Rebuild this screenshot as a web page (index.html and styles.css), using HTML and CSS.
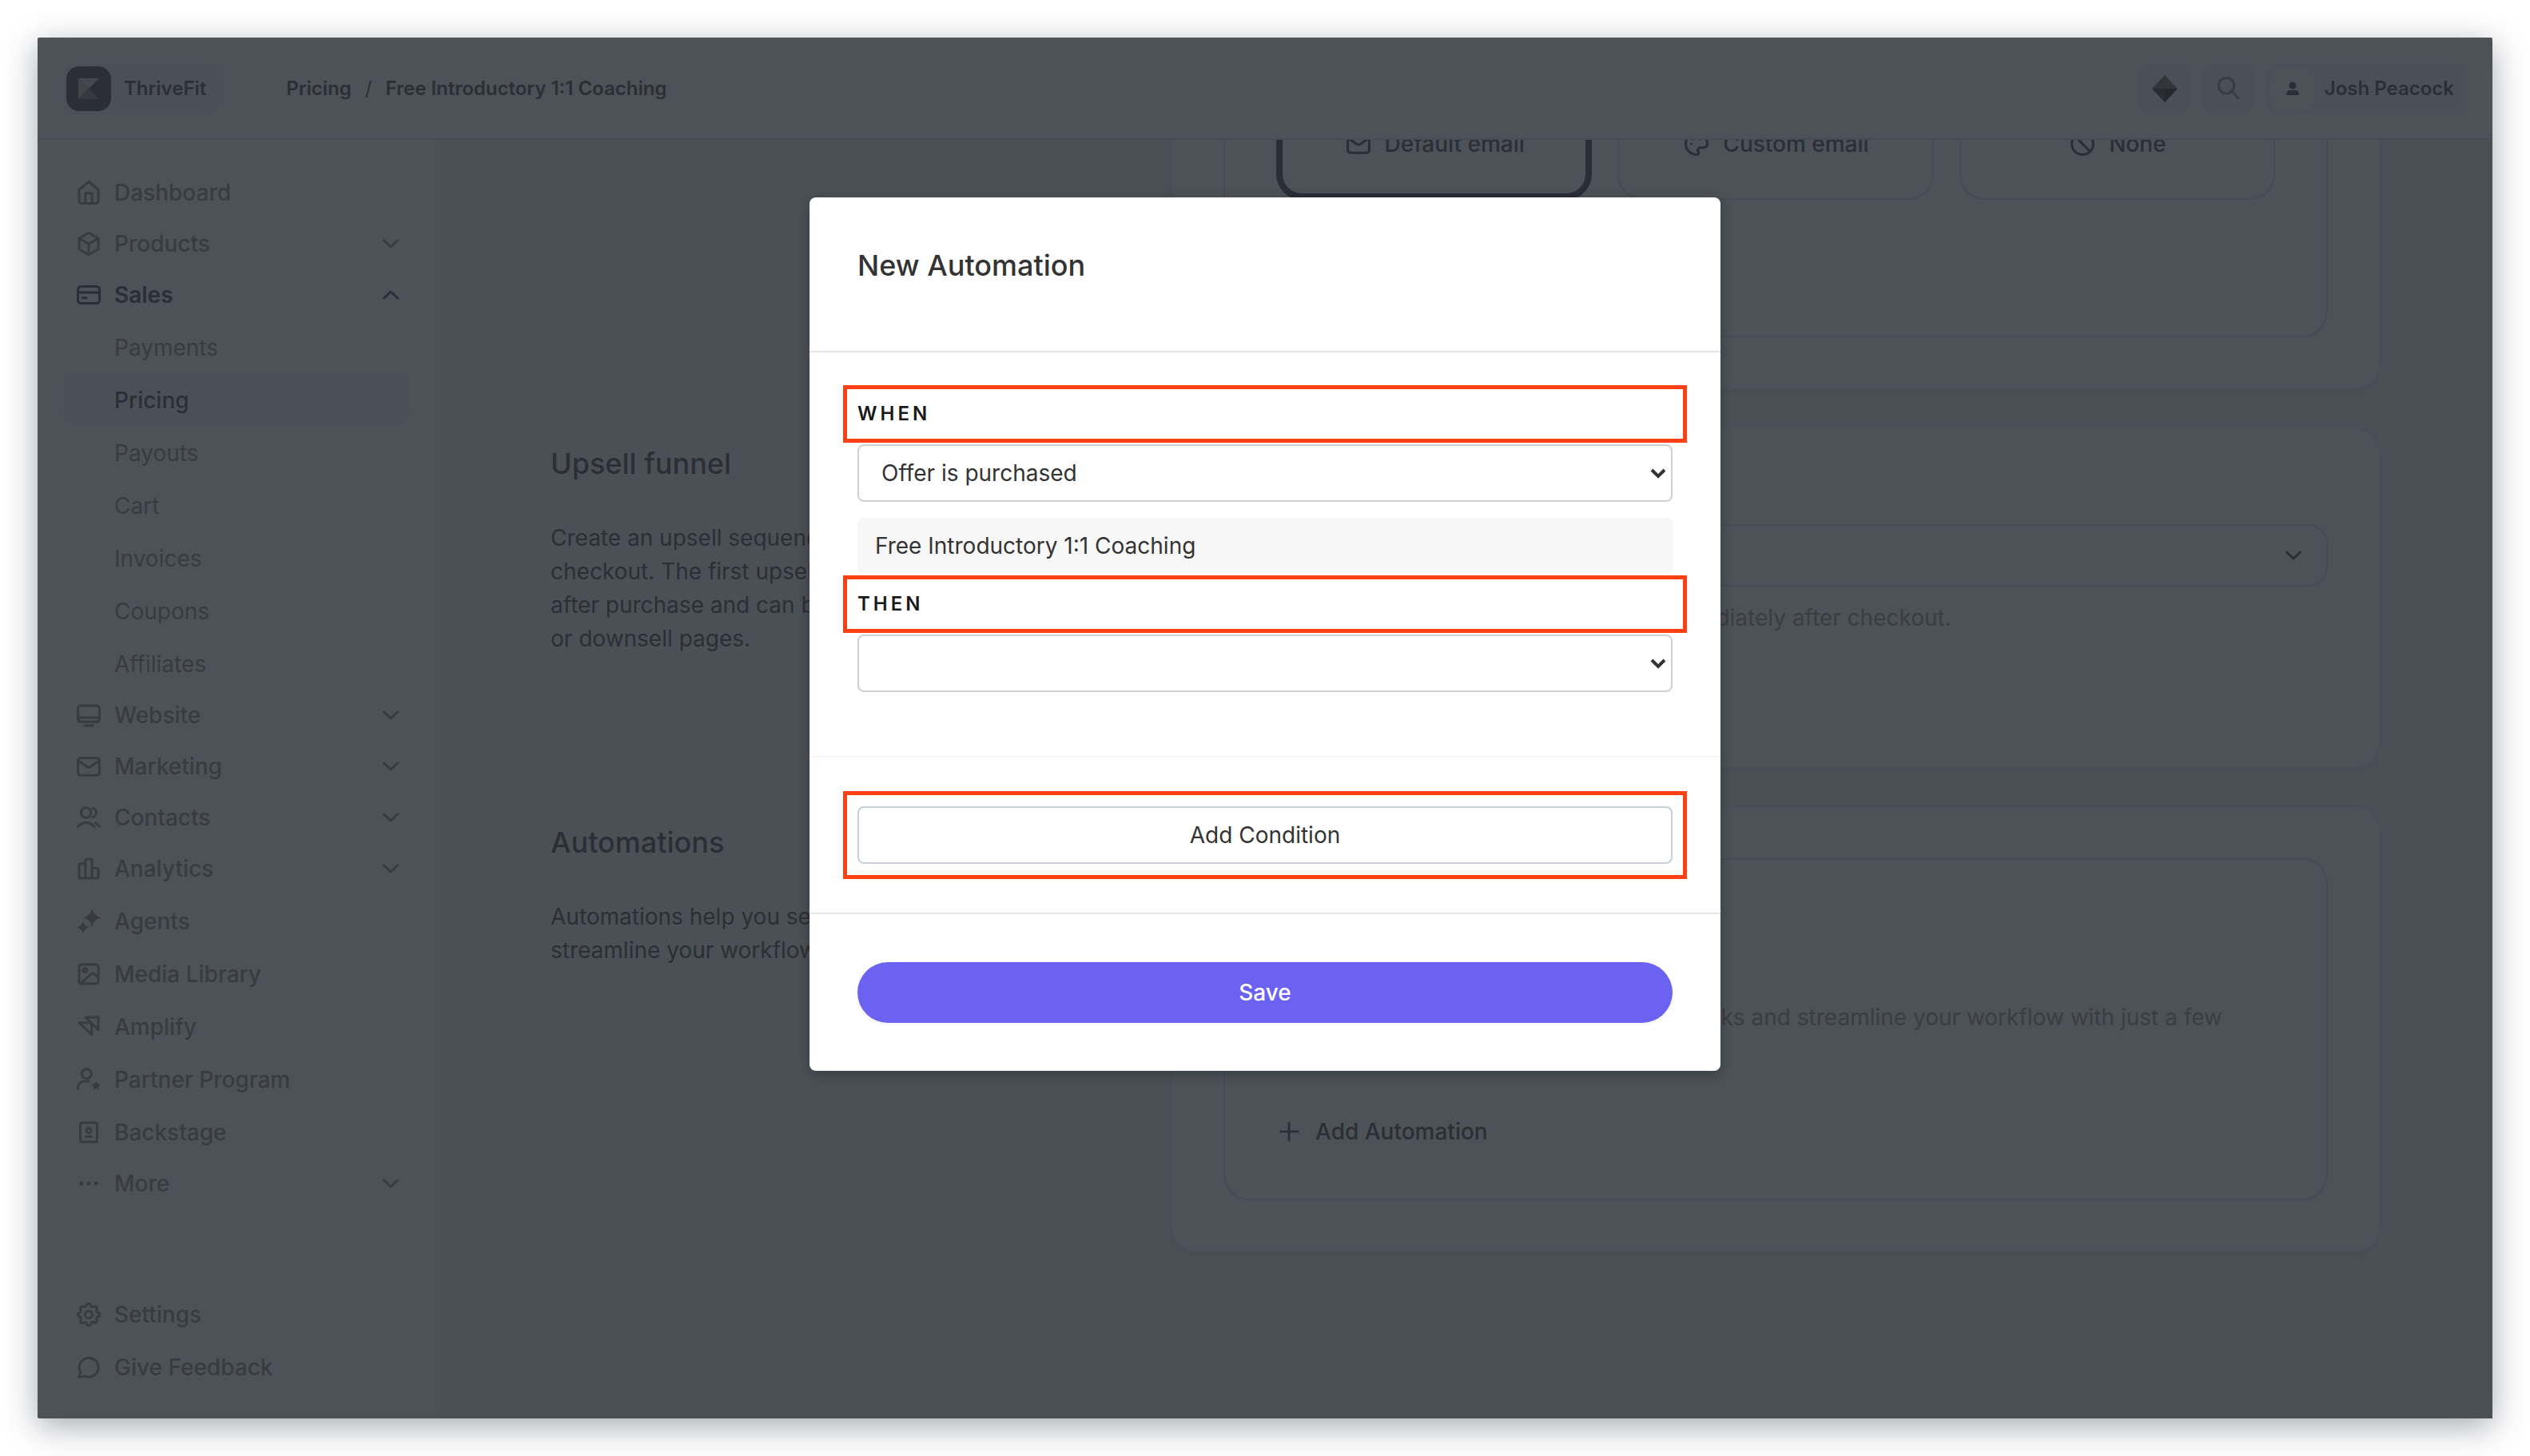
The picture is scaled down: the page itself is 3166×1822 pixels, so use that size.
FILE: index.html
```
<!DOCTYPE html>
<html lang="en">
<head>
  <meta charset="UTF-8" />
  <meta name="viewport" content="width=device-width, initial-scale=1.0" />
  <title>New Automation - ThriveFit</title>
  <link rel="stylesheet" href="styles.css">
</head>
<body>

  <!-- shared icons -->
  <svg class="sprite" aria-hidden="true">
    <symbol id="chevron" viewBox="0 0 24 24"><path d="M3.500 8l8.500 8 8.500-8" /></symbol>
    <symbol id="caret" viewBox="0 0 20 14"><path d="M2 2l8 8 8-8" /></symbol>
    <symbol id="mail" viewBox="0 0 24 24"><rect x="3" y="5" width="18" height="14.500" rx="2.500" /><path d="M3.500 7.500l7.500 5q1 .6 2 0l7.500-5" /></symbol>
  </svg>

  <div class="app">
    <header class="topbar">
      <button class="brand">
        <span class="brand-logo">
          <svg viewBox="0 0 28 28">
            <path d="M1 1h26L14 14z" fill="#45484f" />
            <path d="M1 1v26l13-13z" fill="#41454a" />
            <path d="M1 27h26L14 14z" fill="#363a3f" />
          </svg>
        </span>
        ThriveFit
      </button>

      <nav class="breadcrumb">
        <a href="#">Pricing</a>
        <span class="slash">/</span>
        <a href="#">Free Introductory 1:1 Coaching</a>
      </nav>

      <div class="topbar-actions">
        <button class="icon-btn" aria-label="Assistant">
          <svg class="gem" viewBox="0 0 32 34">
            <path d="M16 0L0 17h16z" fill="#31353b" />
            <path d="M16 0l16 17H16z" fill="#33373b" />
            <path d="M0 17h16v17z" fill="#292c31" />
            <path d="M32 17H16v17z" fill="#25282c" />
          </svg>
        </button>
        <button class="icon-btn" aria-label="Search">
          <svg class="icon" viewBox="0 0 24 24"><circle cx="10" cy="9.500" r="6.500" /><path d="M14.800 14.200l5.200 5.800" /></svg>
        </button>
        <button class="user">
          <span class="avatar">
            <svg viewBox="0 0 16 18"><circle cx="8" cy="5" r="4.500" /><path d="M1 17q-.8 0-.8-1 .2-5 4.300-5h7q4.100 0 4.300 5 0 1-.8 1z" /></svg>
          </span>
          Josh Peacock
        </button>
      </div>
    </header>

    <div class="body">
      <aside class="sidebar">
        <nav class="nav">
          <a href="#" class="nav-item">
            <svg class="icon" viewBox="0 0 24 24"><path d="M12 3l8 6.500V19a2 2 0 0 1-2 2H6a2 2 0 0 1-2-2V9.500z" /><path d="M9.200 21v-7.500a1 1 0 0 1 1-1h3.600a1 1 0 0 1 1 1V21" /></svg>
            Dashboard
          </a>
          <button class="nav-item group">
            <svg class="icon" viewBox="0 0 24 24"><path d="M12 2.800l8 4.700v9L12 21.200l-8-4.700v-9z" /><path d="M4 7.500l8 4.700 8-4.700M12 12.200v9" /></svg>
            Products
            <svg class="chev"><use href="#chevron" /></svg>
          </button>
          <button class="nav-item group open">
            <svg class="icon" viewBox="0 0 24 24"><rect x="3" y="5" width="18" height="14" rx="2.500" /><path d="M3 10h18M7 14.500h3" /></svg>
            Sales
            <svg class="chev"><use href="#chevron" /></svg>
          </button>
          <a href="#" class="nav-item child">Payments</a>
          <a href="#" class="nav-item child active">Pricing</a>
          <a href="#" class="nav-item child">Payouts</a>
          <a href="#" class="nav-item child">Cart</a>
          <a href="#" class="nav-item child">Invoices</a>
          <a href="#" class="nav-item child">Coupons</a>
          <a href="#" class="nav-item child">Affiliates</a>
          <button class="nav-item group">
            <svg class="icon" viewBox="0 0 24 24"><rect x="3" y="4" width="18" height="13.500" rx="2.500" /><path d="M3 14h18M8.500 20.500h7" /></svg>
            Website
            <svg class="chev"><use href="#chevron" /></svg>
          </button>
          <button class="nav-item group">
            <svg class="icon"><use href="#mail" /></svg>
            Marketing
            <svg class="chev"><use href="#chevron" /></svg>
          </button>
          <button class="nav-item group">
            <svg class="icon" viewBox="0 0 24 24"><circle cx="9.800" cy="8" r="4.200" /><path d="M3 19.500q6.800-6.500 13.600 0M15.500 4.200a4 4 0 0 1 0 7.600M17.500 16.500q2 1 3.500 2.800" /></svg>
            Contacts
            <svg class="chev"><use href="#chevron" /></svg>
          </button>
          <button class="nav-item group">
            <svg class="icon" viewBox="0 0 24 24"><path d="M9.200 20V5a1 1 0 0 1 1-1h3.600a1 1 0 0 1 1 1v15M9.200 8H5a1 1 0 0 0-1 1v10a1 1 0 0 0 1 1h14a1 1 0 0 0 1-1v-6.500a1 1 0 0 0-1-1h-4.200" /></svg>
            Analytics
            <svg class="chev"><use href="#chevron" /></svg>
          </button>
          <a href="#" class="nav-item">
            <svg class="icon solid" viewBox="0 0 24 24"><path d="M14.800 1.500q1.500 5.900 7.400 7.400-5.900 1.500-7.400 7.400-1.500-5.900-7.400-7.400 5.900-1.500 7.400-7.400zM7.200 11.800q1.100 4.100 5.200 5.200-4.100 1.100-5.200 5.200-1.100-4.100-5.200-5.200 4.100-1.100 5.200-5.200z" /></svg>
            Agents
          </a>
          <a href="#" class="nav-item">
            <svg class="icon" viewBox="0 0 24 24"><rect x="4" y="4" width="16" height="16" rx="2" /><circle cx="9" cy="8.800" r="1.600" /><path d="M5.500 19.500l9-8q.8-.6 1.600 0l3.900 3.300" /></svg>
            Media Library
          </a>
          <a href="#" class="nav-item">
            <svg class="icon" viewBox="0 0 24 24"><path d="M4 8.500h10.500v10zM9.500 4H20v10.500z" /></svg>
            Amplify
          </a>
          <a href="#" class="nav-item">
            <svg class="icon" viewBox="0 0 24 24"><circle cx="10.200" cy="7.200" r="4" /><path d="M3 19.500v-1a5 5 0 0 1 5-5h4" /><path class="fill" d="M18.200 13l1.200 2.500 2.700.4-2 1.900.5 2.700-2.400-1.300-2.400 1.300.5-2.700-2-1.900 2.700-.4z" /></svg>
            Partner Program
          </a>
          <a href="#" class="nav-item">
            <svg class="icon" viewBox="0 0 24 24"><rect x="5" y="4" width="14" height="16" rx="1" /><circle cx="12" cy="10.500" r="2" /><path d="M9.800 15.500h4.400" /></svg>
            Backstage
          </a>
          <button class="nav-item group">
            <svg class="icon solid" viewBox="0 0 24 24"><circle cx="5.800" cy="12" r="1.700" /><circle cx="12" cy="12" r="1.700" /><circle cx="18.200" cy="12" r="1.700" /></svg>
            More
            <svg class="chev"><use href="#chevron" /></svg>
          </button>
        </nav>

        <nav class="nav nav-bottom">
          <a href="#" class="nav-item">
            <svg class="icon" viewBox="0 0 24 24"><circle cx="12" cy="12" r="3" /><path d="M10.300 4.300c.4-1.700 3-1.700 3.400 0a1.700 1.700 0 0 0 2.600 1.100c1.500-.9 3.300.9 2.400 2.400a1.700 1.700 0 0 0 1 2.500c1.800.4 1.800 3 0 3.400a1.700 1.700 0 0 0-1 2.600c.9 1.500-.9 3.300-2.400 2.400a1.700 1.700 0 0 0-2.600 1c-.4 1.800-3 1.800-3.400 0a1.700 1.700 0 0 0-2.500-1c-1.600.9-3.400-.9-2.500-2.400a1.700 1.700 0 0 0-1-2.600c-1.800-.4-1.800-3 0-3.400a1.700 1.700 0 0 0 1-2.500c-.9-1.500.9-3.300 2.500-2.400a1.700 1.700 0 0 0 2.500-1.100z" /></svg>
            Settings
          </a>
          <a href="#" class="nav-item">
            <svg class="icon" viewBox="0 0 24 24"><path d="M3.500 20q1.800-1.800 1.500-4.200A8 8 0 1 1 8.800 19.400q-2.500.8-5.300.6z" /></svg>
            Give Feedback
          </a>
        </nav>
      </aside>

      <main class="content">
        <div class="sections">

          <section class="section">
            <div class="intro"></div>
            <div class="card">
              <div class="panel email-panel">
                <div class="options">
                  <button class="option selected">
                    <svg class="icon"><use href="#mail" /></svg>
                    Default email
                  </button>
                  <button class="option">
                    <svg class="icon" viewBox="0 0 24 24"><path d="M12 21a9 9 0 1 1 9-9c0 2.500-1.800 3.200-3.500 3.200H15a2 2 0 0 0-1.500 3.300c.8 1 .2 2.500-1.500 2.500z" /><path d="M7.500 12h.1M9.500 8h.1M14.500 8h.1" /></svg>
                    Custom email
                  </button>
                  <button class="option">
                    <svg class="icon" viewBox="0 0 24 24"><circle cx="12" cy="12" r="9" /><path d="M5.700 5.700l12.600 12.600" /></svg>
                    None
                  </button>
                </div>
              </div>
            </div>
          </section>

          <section class="section">
            <div class="intro">
              <h2>Upsell funnel</h2>
              <p>Create an upsell sequence to show after checkout. The first upsell is displayed right after purchase and can be followed by upsell or downsell pages.</p>
            </div>
            <div class="card upsell-card">
              <label for="upsell">Upsell</label>
              <div class="select-wrap">
                <select id="upsell" class="upsell-select"><option></option></select>
                <svg class="chev"><use href="#chevron" /></svg>
              </div>
              <p class="help">Your first upsell page is what buyers see immediately after checkout.</p>
            </div>
          </section>

          <section class="section">
            <div class="intro">
              <h2>Automations</h2>
              <p>Automations help you set up tasks and streamline your workflow.</p>
            </div>
            <div class="card">
              <div class="panel automation-panel">
                <h3>Automations</h3>
                <p class="help">Create automations to trigger your key tasks and streamline your workflow with just a few clicks.</p>
                <button class="add-automation">
                  <svg class="icon plus" viewBox="0 0 24 24"><path d="M12 4v16M4 12h16" /></svg>
                  Add Automation
                </button>
              </div>
            </div>
          </section>

        </div>
      </main>
    </div>

    <!-- modal -->
    <div class="overlay">
      <form class="modal" role="dialog" aria-labelledby="modalTitle">
        <div class="modal-header">
          <h1 id="modalTitle">New Automation</h1>
        </div>

        <div class="modal-body">
          <label class="highlight" for="when">When</label>
          <div class="select-wrap">
            <select id="when" class="field">
              <option>Offer is purchased</option>
            </select>
            <svg class="caret"><use href="#caret" /></svg>
          </div>
          <div class="offer-name">Free Introductory 1:1 Coaching</div>

          <label class="highlight" for="then">Then</label>
          <div class="select-wrap">
            <select id="then" class="field">
              <option></option>
            </select>
            <svg class="caret"><use href="#caret" /></svg>
          </div>
        </div>

        <div class="modal-condition">
          <div class="highlight highlight-btn">
            <button type="button" class="condition-btn">Add Condition</button>
          </div>
        </div>

        <div class="modal-footer">
          <button type="button" class="save-btn">Save</button>
        </div>
      </form>
    </div>
  </div>

</body>
</html>
```

FILE: styles.css
```
:root {
  --surface: #4d5158;
  --page: #4b5057;
  --chip: #4b4f57;
  --line: #474b53;
  --ink: #2b2f35;
  --ink-dark: #2b2e37;
  --muted: #383c40;
  --highlight: #ff4013;
}

* {
  box-sizing: border-box;
}

body {
  margin: 0;
  padding: 47px;
  min-height: 100vh;
  display: flex;
  background: #fff;
  color: var(--ink);
  font-family: Inter, "Liberation Sans", sans-serif;
  font-size: 28px;
  line-height: 42px;
}

button, select {
  font: inherit;
  color: inherit;
  background: none;
  border: 0;
  padding: 0;
  cursor: pointer;
}

a {
  color: inherit;
  text-decoration: none;
}

h1, h2, h3, p {
  margin: 0;
}

.sprite {
  position: absolute;
  width: 0;
  height: 0;
}

.icon, .chev, .caret {
  flex: none;
  width: 36px;
  height: 36px;
  fill: none;
  stroke: currentColor;
  stroke-width: 2;
  stroke-linecap: round;
  stroke-linejoin: round;
}

.icon .fill, .icon.solid {
  fill: currentColor;
  stroke-width: 0;
}

.chev {
  width: 24px;
  height: 24px;
  stroke-width: 3;
}

.app {
  position: relative;
  flex: 1;
  display: flex;
  flex-direction: column;
  background: var(--surface);
  border-radius: 2px;
  box-shadow: 0 10px 40px rgba(51, 58, 72, 0.44);
}

/* top bar */
.topbar {
  display: flex;
  align-items: center;
  height: 128px;
  padding: 2px 32px 0;
  border-bottom: 2px solid var(--line);
  font-size: 24px;
  font-weight: 600;
  color: var(--ink);
}

.brand {
  display: flex;
  align-items: center;
  gap: 16px;
  height: 64px;
  padding: 0 22px 0 4px;
  border-radius: 20px;
  background: var(--chip);
}

.brand-logo {
  display: grid;
  place-items: center;
  width: 56px;
  height: 56px;
  border-radius: 16px;
  background: var(--ink-dark);
}

.brand-logo svg {
  width: 28px;
  height: 28px;
}

.breadcrumb {
  display: flex;
  gap: 17px;
  margin-left: 78px;
}

.slash {
  font-weight: 400;
}

.topbar-actions {
  display: flex;
  gap: 16px;
  margin-left: auto;
}

.icon-btn, .user {
  display: flex;
  align-items: center;
  justify-content: center;
  height: 64px;
  border-radius: 16px;
  background: var(--chip);
}

.icon-btn {
  width: 64px;
  color: var(--muted);
}

.gem {
  width: 32px;
  height: 34px;
}

.user {
  gap: 12px;
  padding: 0 16px 0 4px;
}

.avatar {
  display: grid;
  place-items: center;
  width: 56px;
  height: 56px;
  border-radius: 16px;
  background: var(--surface);
}

.avatar svg {
  width: 16px;
  height: 18px;
  fill: var(--ink-dark);
}

.body {
  flex: 1;
  display: flex;
  min-height: 0;
}

/* sidebar */
.sidebar {
  flex: none;
  display: flex;
  flex-direction: column;
  width: 498px;
  padding: 31px 32px 33px;
}

.nav {
  display: flex;
  flex-direction: column;
}

.nav-bottom {
  margin-top: auto;
}

.nav-item {
  display: flex;
  align-items: center;
  gap: 14px;
  height: 66px;
  padding: 4px 12px 0 14px;
  border-radius: 16px;
  color: var(--muted);
  font-weight: 500;
}

.nav-item.group {
  height: 64px;
  padding-top: 2px;
}

.nav-item .chev {
  margin-left: auto;
}

.nav-item.open {
  color: var(--ink-dark);
  font-weight: 600;
}

.nav-item.open .chev {
  transform: rotate(180deg);
}

.nav-item.child {
  padding-left: 64px;
  font-weight: 400;
}

.nav-item.active {
  background: var(--chip);
  color: var(--ink);
  font-weight: 500;
}

/* content */
.content {
  flex: 1;
  height: 1600px;
  overflow: hidden;
  background: var(--page);
}

/* scrolled down to the automations */
.sections {
  display: flex;
  flex-direction: column;
  gap: 46px;
  margin-top: -197px;
  padding: 0 140px 0 144px;
}

.section {
  display: grid;
  grid-template-columns: 744px 1fr;
  gap: 32px;
}

.intro {
  padding-top: 24px;
}

.intro h2 {
  margin-bottom: 50px;
  font-size: 36px;
  line-height: 44px;
  font-weight: 500;
}

.intro p {
  max-width: 620px;
}

.card {
  padding: 64px;
  border: 2px solid #4a4e56;
  border-radius: 32px;
  background: var(--surface);
  box-shadow: 0 4px 8px rgba(0, 0, 0, 0.04);
}

.panel {
  padding: 64px;
  border: 2px solid var(--line);
  border-radius: 32px;
}

.email-panel {
  padding-bottom: 170px;
}

.options {
  display: grid;
  grid-template-columns: repeat(3, 1fr);
  gap: 32px;
}

.option {
  display: flex;
  align-items: center;
  justify-content: center;
  gap: 15px;
  height: 140px;
  border: 2px solid var(--line);
  border-radius: 32px;
  color: var(--ink-dark);
  font-weight: 500;
}

.option.selected {
  border: 8px solid var(--ink-dark);
}

.upsell-card {
  padding-bottom: 166px;
}

.upsell-card label {
  display: block;
  height: 56px;
}

.select-wrap {
  position: relative;
}

.select-wrap select {
  appearance: none;
  display: block;
  width: 100%;
}

.upsell-select {
  height: 78px;
  border: 2px solid var(--line);
  border-radius: 24px;
}

.select-wrap .chev {
  position: absolute;
  right: 31px;
  top: 27px;
}

.help {
  color: #3a3e43;
}

.upsell-card .help {
  margin-top: 18px;
}

.automation-panel h3 {
  height: 112px;
  font-size: 28px;
  font-weight: 500;
}

.add-automation {
  display: flex;
  align-items: center;
  gap: 17px;
  height: 40px;
  margin-top: 60px;
  font-weight: 500;
}

.icon.plus {
  width: 32px;
}

/* modal */
.overlay {
  position: absolute;
  inset: 0;
  display: flex;
  justify-content: center;
  align-items: flex-start;
  padding-top: 200px;
}

.modal {
  width: 100%;
  max-width: 1140px;
  border-radius: 8px;
  background: #fff;
  color: #333;
  box-shadow: 0 4px 16px rgba(0, 0, 0, 0.25);
}

.modal-header {
  padding: 61px 60px 83px;
  border-bottom: 2px solid #e5e5e5;
}

.modal-header h1 {
  font-size: 36px;
  line-height: 48px;
  font-weight: 500;
}

.modal-body {
  padding: 41px 60px 80px;
  border-bottom: 2px solid #f7f7f7;
}

.highlight {
  display: block;
  margin: 0 -18px 2px;
  padding: 10px 13px;
  border: 5px solid var(--highlight);
  color: #1a1a1a;
  font-size: 24px;
  font-weight: 600;
  letter-spacing: 4px;
  text-transform: uppercase;
}

.field {
  height: 72px;
  padding: 0 60px 0 28px;
  border: 2px solid #d0d0d0;
  border-radius: 8px;
}

.caret {
  position: absolute;
  right: 8px;
  top: 30px;
  width: 20px;
  height: 14px;
  stroke-width: 4;
  stroke-linecap: butt;
  stroke-linejoin: miter;
}

.offer-name {
  margin: 20px 0 2px;
  padding: 14px 22px;
  border-radius: 8px;
  background: #f7f7f7;
}

.modal-condition {
  padding: 42px 60px;
  border-bottom: 2px solid #e5e5e5;
}

.highlight-btn {
  margin-bottom: 0;
  padding: 14px 13px;
  letter-spacing: normal;
  text-transform: none;
}

.condition-btn, .save-btn {
  display: block;
  width: 100%;
  color: #333;
  font-size: 28px;
  font-weight: 400;
}

.condition-btn {
  height: 72px;
  border: 2px solid #c6cfdb;
  border-radius: 8px;
}

.modal-footer {
  padding: 60px;
}

.save-btn {
  height: 76px;
  border-radius: 38px;
  background: #6b62f2;
  color: #fff;
  font-weight: 500;
  box-shadow: 0 2px 4px rgba(0, 0, 0, 0.06);
}
```
